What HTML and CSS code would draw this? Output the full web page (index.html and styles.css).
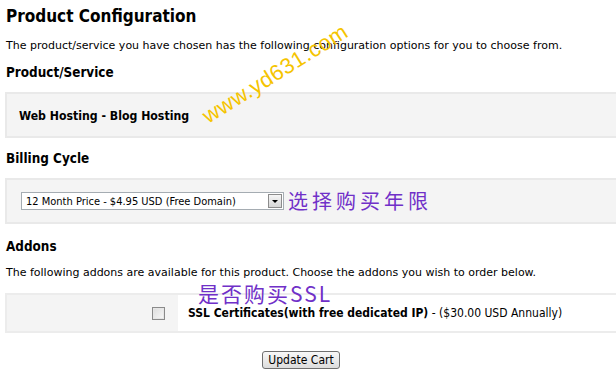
FILE: index.html
```html
<!DOCTYPE html>
<html>
<head>
    <title>Product Configuration</title>
    <link rel="stylesheet" href="styles.css">
</head>
<body>
    <div class="page">
        <h1>Product Configuration</h1>
        <p class="intro">The product/service you have chosen has the following configuration options for you to choose from.</p>

        <h2>Product/Service</h2>
        <div class="box">
            <strong class="product">Web Hosting - Blog Hosting</strong>
        </div>

        <h2 class="billing-title">Billing Cycle</h2>
        <div class="box box-billing">
            <span class="select">
                <span class="select-text">12 Month Price - $4.95 USD (Free Domain)</span>
                <span class="select-arrow"></span>
            </span>
            <span class="note">选择购买年限</span>
        </div>

        <h2 class="addons-title">Addons</h2>
        <p class="addons-intro">The following addons are available for this product. Choose the addons you wish to order below.</p>
        <div class="addons">
            <div class="addon-check"><span class="checkbox"></span></div>
            <div class="addon-info"><span><strong>SSL Certificates(with free dedicated IP)</strong> - ($30.00 USD Annually)</span></div>
            <span class="note note-ssl">是否购买SSL</span>
        </div>

        <div class="actions">
            <button class="update">Update Cart</button>
        </div>

        <span class="watermark">www.yd631.com</span>
    </div>
</body>
</html>
```

FILE: styles.css
```css
body{
    margin: 0;
    overflow: hidden;
    background: #fff;
    font-family: "DejaVu Sans Condensed", "DejaVu Sans", sans-serif;
    color: #000;
}
.page{
    position: relative;
    padding: 6px 0 0 5px;
}
h1{
    margin: 0 0 0 1px;
    font-size: 17px;
    line-height: 20px;
    font-weight: bold;
}
p{
    margin: 0 0 0 1px;
    font-family: "DejaVu Sans", sans-serif;
    font-size: 11px;
    line-height: 16px;
}
.intro{
    margin-top: 12px;
}
h2{
    margin: 10px 0 0 1px;
    font-size: 13.4px;
    line-height: 18px;
    font-weight: bold;
}
.box{
    box-sizing: border-box;
    height: 46px;
    margin: 10px -20px 0 0;
    padding: 0 12px;
    display: flex;
    align-items: center;
    background: #f4f4f4;
    border: 2px solid #e9e9e9;
}
.product{
    font-size: 12.2px;
    padding-top: 2px;
}
.billing-title{
    margin-top: 12px;
}
.box-billing{
    padding-left: 14px;
    gap: 4px;
}
.select{
    box-sizing: border-box;
    width: 263px;
    height: 18px;
    display: flex;
    align-items: center;
    background: #fff;
    border: 1px solid #a5acb2;
    font-size: 11px;
    padding-left: 4px;
}
.select-text{
    flex: 1;
    white-space: nowrap;
}
.select-arrow{
    position: relative;
    width: 14px;
    height: 14px;
    margin-right: 1px;
    box-sizing: border-box;
    border: 1px solid #8c8c8c;
    background: linear-gradient(#f6f6f6, #d6d6d6);
}
.select-arrow:after{
    content: "";
    position: absolute;
    left: 3px;
    top: 5px;
    border-left: 3px solid transparent;
    border-right: 3px solid transparent;
    border-top: 3px solid #000;
}
.note{
    font-family: "Noto Sans CJK SC", sans-serif;
    color: #7030c8;
    font-size: 20px;
    line-height: 22px;
    letter-spacing: 4px;
}
.addons-title{
    margin-top: 14px;
}
.addons-intro{
    margin-top: 9px;
}
.addons{
    position: relative;
    margin: 12px -20px 0 0;
    height: 40px;
    box-sizing: border-box;
    display: flex;
    border: 2px solid #ececec;
    border-right: 0;
}
.addon-check{
    width: 171px;
    display: flex;
    align-items: center;
    justify-content: flex-end;
    padding-right: 13px;
    box-sizing: border-box;
    background: #f4f4f4;
}
.checkbox{
    width: 11px;
    height: 11px;
    border: 1px solid #8a8a8a;
    background: linear-gradient(135deg, #dcdcdc, #f8f8f8);
    box-shadow: inset 0 0 0 1px #e6e6e6;
}
.addon-info{
    flex: 1;
    display: flex;
    align-items: center;
    padding-left: 10px;
    font-size: 12px;
    white-space: nowrap;
}
.note-ssl{
    position: absolute;
    left: 191px;
    top: -13px;
    font-size: 21px;
    letter-spacing: 2px;
}
.actions{
    margin-top: 16px;
    text-align: center;
    padding-right: 19px;
}
.update{
    font-family: "DejaVu Sans Condensed", "DejaVu Sans", sans-serif;
    font-size: 12px;
    height: 18px;
    padding: 0 5px;
    border: 1px solid #6f6f6f;
    border-radius: 3px;
    background: linear-gradient(#f8f8f8, #dcdcdc);
    color: #000;
}
.watermark{
    position: absolute;
    left: 192px;
    top: 61px;
    font-family: "Liberation Sans", Arial, sans-serif;
    font-size: 22px;
    letter-spacing: 0.5px;
    color: #f5c400;
    transform: rotate(-32deg);
    transform-origin: center;
}
```
